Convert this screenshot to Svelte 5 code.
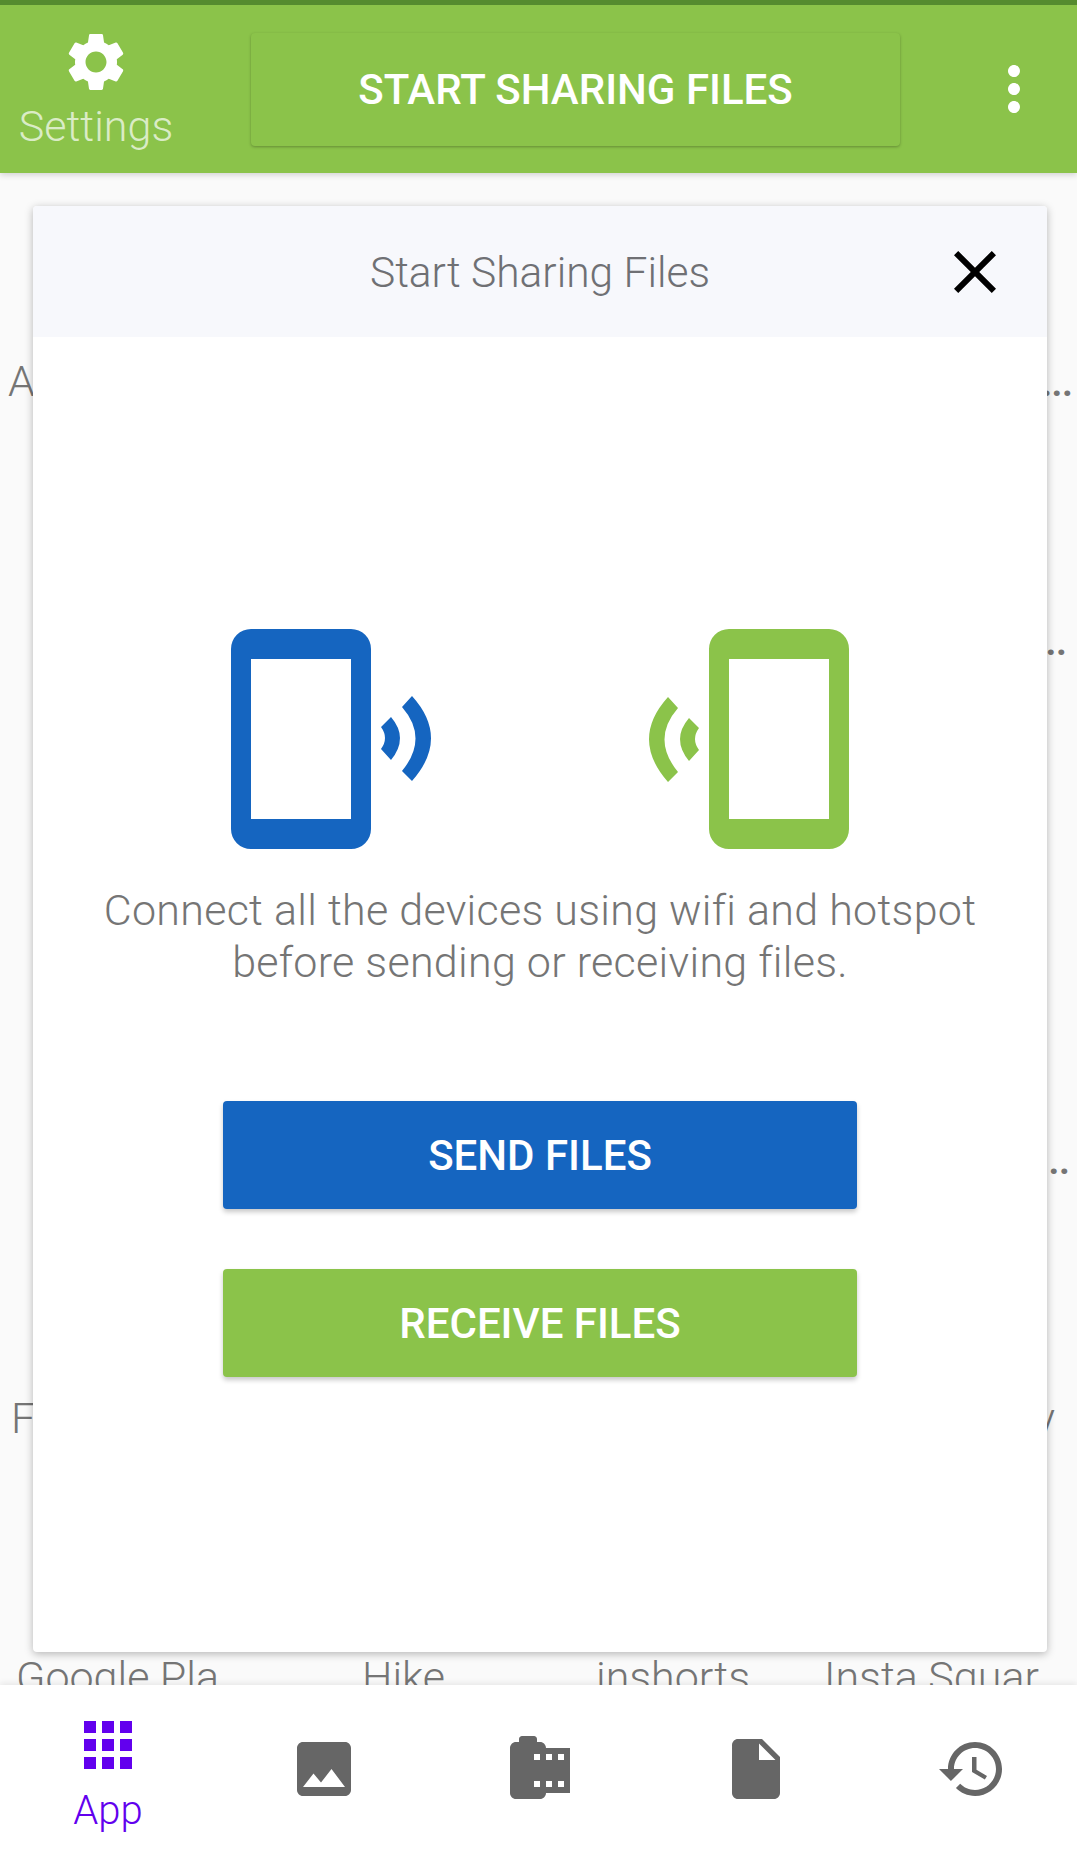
<script lang="ts">
  const rows = [
    { left: "A", right: "...", pl: 8, pr: 5 },
    { left: "", right: "..", pl: 0, pr: 11 },
    { left: "", right: "", pl: 0, pr: 0 },
    { left: "", right: "..", pl: 0, pr: 8 },
    { left: "F", right: "y", pl: 11, pr: 22 }
  ];
  const lastRow = ["Google Pla", "Hike", "inshorts", "Insta Squar"];

  const gear =
    "M19.14 12.94c.04-.3.06-.61.06-.94 0-.32-.02-.64-.07-.94l2.03-1.58c.18-.14.23-.41.12-.61l-1.92-3.32c-.12-.22-.37-.29-.59-.22l-2.39.96c-.5-.38-1.03-.7-1.62-.94l-.36-2.54c-.04-.24-.24-.41-.48-.41h-3.84c-.24 0-.43.17-.47.41l-.36 2.54c-.59.24-1.13.57-1.62.94l-2.39-.96c-.22-.08-.47 0-.59.22L2.74 8.87c-.12.21-.08.47.12.61l2.03 1.58c-.05.3-.09.63-.09.94s.02.64.07.94l-2.03 1.58c-.18.14-.23.41-.12.61l1.92 3.32c.12.22.37.29.59.22l2.39-.96c.5.38 1.03.7 1.62.94l.36 2.54c.05.24.24.41.48.41h3.84c.24 0 .44-.17.47-.41l.36-2.54c.59-.24 1.13-.56 1.62-.94l2.39.96c.22.08.47 0 .59-.22l1.92-3.32c.12-.22.07-.47-.12-.61l-2.01-1.58zM12 15.6c-1.98 0-3.6-1.62-3.6-3.6s1.62-3.6 3.6-3.6 3.6 1.62 3.6 3.6-1.62 3.6-3.6 3.6z";
  const more =
    "M12 8c1.1 0 2-.9 2-2s-.9-2-2-2-2 .9-2 2 .9 2 2 2zm0 2c-1.1 0-2 .9-2 2s.9 2 2 2 2-.9 2-2-.9-2-2-2zm0 6c-1.1 0-2 .9-2 2s.9 2 2 2 2-.9 2-2-.9-2-2-2z";
  const close =
    "M19 6.41L17.59 5 12 10.59 6.41 5 5 6.41 10.59 12 5 17.59 6.41 19 12 13.41 17.59 19 19 17.59 13.41 12z";

  const tabs = [
    { label: "App", d: "M4 8h4V4H4v4zm6 12h4v-4h-4v4zm-6 0h4v-4H4v4zm0-6h4v-4H4v4zm6 0h4v-4h-4v4zm6-10v4h4V4h-4zm-6 4h4V4h-4v4zm6 6h4v-4h-4v4zm0 6h4v-4h-4v4z" },
    { label: "", d: "M21 19V5c0-1.1-.9-2-2-2H5c-1.1 0-2 .9-2 2v14c0 1.1.9 2 2 2h14c1.1 0 2-.9 2-2zM8.5 13.5l2.5 3.01L14.5 12l4.5 6H5l3.5-4.5z" },
    { label: "", d: "M14 5c0-1.1-.9-2-2-2h-1V2c0-.55-.45-1-1-1H6c-.55 0-1 .45-1 1v1H4c-1.1 0-2 .9-2 2v15c0 1.1.9 2 2 2h8c1.1 0 2-.9 2-2h8V5h-8zm-2 13h-2v-2h2v2zm0-9h-2V7h2v2zm4 9h-2v-2h2v2zm0-9h-2V7h2v2zm4 9h-2v-2h2v2zm0-9h-2V7h2v2z" },
    { label: "", d: "M6 2c-1.1 0-1.99.9-1.99 2L4 20c0 1.1.89 2 1.99 2H18c1.1 0 2-.9 2-2V8l-6-6H6zm7 7V3.5L18.5 9H13z" },
    { label: "", d: "M13 3c-4.97 0-9 4.03-9 9H1l3.89 3.89.07.14L9 12H6c0-3.87 3.13-7 7-7s7 3.13 7 7-3.13 7-7 7c-1.93 0-3.68-.79-4.94-2.06l-1.42 1.42C8.27 19.99 10.51 21 13 21c4.97 0 9-4.03 9-9s-4.03-9-9-9zm-1 5v5l4.28 2.54.72-1.21-3.5-2.08V8H12z" }
  ];
</script>

<div class="screen">
  <header class="topbar">
    <div class="settings">
      <svg class="gear" viewBox="0 0 24 24"><path d={gear} /></svg>
      <span>Settings</span>
    </div>
    <div class="start-btn">START SHARING FILES</div>
    <svg class="more" viewBox="0 0 24 24"><path d={more} /></svg>
  </header>

  <main class="apps">
    {#each rows as row}
      <div class="app-row" style="padding-left: {row.pl}px; padding-right: {row.pr}px">
        <span>{row.left}</span>
        <span class:dots={row.right.startsWith(".")}>{row.right}</span>
      </div>
    {/each}
    <div class="app-grid">
      {#each lastRow as name}
        <span>{name}</span>
      {/each}
    </div>
  </main>

  <section class="modal">
    <div class="modal-head">
      <span>Start Sharing Files</span>
      <svg class="close" viewBox="0 0 24 24"><path d={close} /></svg>
    </div>
    <div class="modal-body">
      <div class="devices">
        <svg class="device blue" viewBox="0 0 200 220">
          <path fill-rule="evenodd" d="M20 0H120A20 20 0 0 1 140 20V200A20 20 0 0 1 120 220H20A20 20 0 0 1 0 200V20A20 20 0 0 1 20 0ZM20 30V190H120V30Z" />
          <path d="M150 98L160 88Q178 109 160 131L150 120Q158 109 150 98Z" />
          <path d="M171 78L181 67Q219 109 181 152L171 142Q198 109 171 78Z" />
        </svg>
        <svg class="device green" viewBox="0 0 200 220">
          <path fill-rule="evenodd" d="M20 0H120A20 20 0 0 1 140 20V200A20 20 0 0 1 120 220H20A20 20 0 0 1 0 200V20A20 20 0 0 1 20 0ZM20 30V190H120V30Z" />
          <path d="M150 99L160 89Q178 110 160 132L150 121Q158 110 150 99Z" />
          <path d="M171 79L181 68Q219 110 181 153L171 143Q198 110 171 79Z" />
        </svg>
      </div>
      <p class="hint">Connect all the devices using wifi and hotspot<br />before sending or receiving files.</p>
      <div class="action send">SEND FILES</div>
      <div class="action receive">RECEIVE FILES</div>
    </div>
  </section>

  <nav class="tabs">
    {#each tabs as tab, i}
      <div class="tab" class:active={i === 0}>
        <svg viewBox="0 0 24 24"><path d={tab.d} /></svg>
        {#if tab.label}<span>{tab.label}</span>{/if}
      </div>
    {/each}
  </nav>
</div>

<style>
  :global(body) {
    margin: 0;
    background: #fafafa;
  }

  .screen {
    position: relative;
    width: 1077px;
    height: 1853px;
    overflow: hidden;
    background: #fafafa;
    font-family: Roboto, "Noto Sans", sans-serif;
  }

  .topbar {
    position: relative;
    z-index: 2;
    box-sizing: border-box;
    height: 173px;
    border-top: 5px solid #558b2f;
    background: #8bc34a;
    box-shadow: 0 2px 6px rgba(0, 0, 0, 0.16);
    display: flex;
    align-items: flex-start;
  }

  .settings {
    width: 192px;
    flex: none;
    margin-top: 22px;
    display: flex;
    flex-direction: column;
    align-items: center;
    color: rgba(255, 255, 255, 0.7);
    font-size: 43px;
    font-weight: 300;
    line-height: 46px;
  }

  .gear {
    width: 70px;
    height: 70px;
    fill: #fff;
    margin-bottom: 6px;
  }

  .start-btn {
    width: 649px;
    height: 113px;
    margin: 28px 0 0 59px;
    flex: none;
    display: flex;
    align-items: center;
    justify-content: center;
    background: #8bc34a;
    border-radius: 4px;
    box-shadow: 0 1px 3px rgba(0, 0, 0, 0.28);
    color: #fff;
    font-size: 42px;
    font-weight: 500;
  }

  .more {
    width: 72px;
    height: 72px;
    margin: 48px 0 0 78px;
    flex: none;
    fill: #fff;
  }

  .apps {
    color: #757575;
    font-size: 43px;
    font-weight: 300;
    line-height: 46px;
    padding-top: 185px;
  }

  .app-row {
    height: 259.2px;
    display: flex;
    justify-content: space-between;
  }

  .dots {
    font-weight: 500;
    letter-spacing: -1.5px;
  }

  .app-grid {
    display: grid;
    grid-template-columns: 346px 234px 228px 1fr;
    padding-left: 16px;
  }

  .modal {
    position: absolute;
    top: 206px;
    left: 33px;
    width: 1014px;
    height: 1446px;
    z-index: 1;
    background: #fff;
    border-radius: 4px;
    box-shadow: 0 2px 8px rgba(0, 0, 0, 0.28);
    overflow: hidden;
  }

  .modal-head {
    height: 131px;
    background: #f7f8fc;
    display: flex;
    align-items: center;
    justify-content: center;
    position: relative;
    color: #6f7074;
    font-size: 42.5px;
    font-weight: 300;
    padding-top: 2px;
    box-sizing: border-box;
  }

  .close {
    position: absolute;
    right: 36px;
    top: 30px;
    width: 72px;
    height: 72px;
    fill: #000;
  }

  .modal-body {
    padding-top: 292px;
    display: flex;
    flex-direction: column;
    align-items: center;
  }

  .devices {
    display: flex;
    gap: 218px;
  }

  .device {
    display: block;
    width: 200px;
    height: 220px;
  }

  .device.blue {
    fill: #1565c0;
  }

  .device.green {
    fill: #8bc34a;
    transform: scaleX(-1);
  }

  .hint {
    margin: 35px 0 0;
    color: #757575;
    font-size: 43px;
    font-weight: 300;
    letter-spacing: 0.28px;
    line-height: 52px;
    text-align: center;
  }

  .action {
    width: 634px;
    height: 108px;
    display: flex;
    align-items: center;
    justify-content: center;
    border-radius: 4px;
    box-shadow: 0 3px 5px rgba(0, 0, 0, 0.22);
    color: #fff;
    font-size: 42px;
    font-weight: 500;
  }

  .send {
    margin-top: 113px;
    background: #1565c0;
  }

  .receive {
    margin-top: 60px;
    background: #8bc34a;
  }

  .tabs {
    position: absolute;
    left: 0;
    right: 0;
    bottom: 0;
    z-index: 2;
    height: 168px;
    background: #fff;
    box-shadow: 0 -2px 6px rgba(0, 0, 0, 0.08);
    display: grid;
    grid-template-columns: repeat(5, 216px);
  }

  .tab {
    display: flex;
    flex-direction: column;
    align-items: center;
    justify-content: center;
    fill: #666;
    color: #6200ee;
    font-size: 40px;
    font-weight: 300;
    line-height: 44px;
  }

  .tab.active {
    fill: #6200ee;
    justify-content: flex-start;
    padding-top: 24px;
  }

  .tab.active span {
    margin-top: 8px;
  }

  .tab svg {
    width: 72px;
    height: 72px;
  }
</style>
